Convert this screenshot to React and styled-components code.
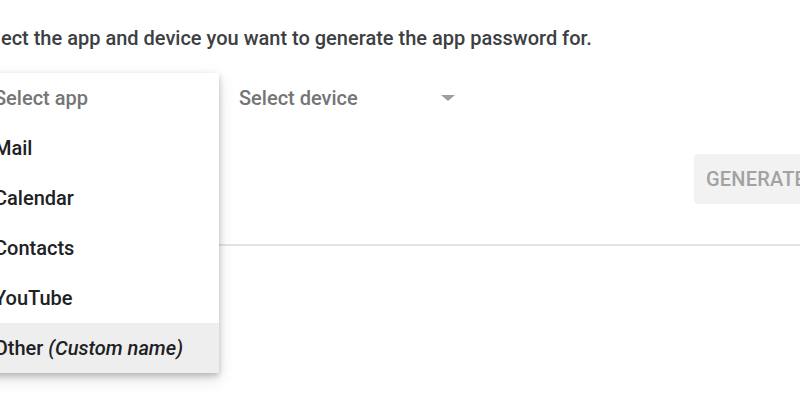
import React from "react";
import styled, { createGlobalStyle } from "styled-components";

const Global = createGlobalStyle`
  html, body { margin: 0; padding: 0; background: #fff; }
  body { font-family: Roboto, "Noto Sans", Arial, sans-serif; overflow: hidden; width: 800px; height: 400px; }
`;

const Page = styled.div`
  box-sizing: border-box;
  padding-top: 26px;
  width: 800px;
  height: 400px;
  overflow: hidden;
`;

const Inner = styled.div`
  margin-left: -27px;
  display: flex;
  flex-direction: column;
`;

const Heading = styled.div`
  font-size: 20px;
  line-height: 24px;
  font-weight: 500;
  color: #3c4043;
  white-space: nowrap;
`;

const FieldsRow = styled.div`
  margin-top: 23px;
  display: flex;
  height: 50px;
`;

const Field = styled.div`
  position: relative;
  width: ${(p) => p.$w}px;
  height: 50px;
  display: flex;
  align-items: center;
  padding-left: 20px;
  box-sizing: border-box;
  font-size: 20px;
  font-weight: 500;
  color: #757575;
`;

const Arrow = styled.span`
  margin-left: auto;
  margin-right: 14px;
  width: 0;
  height: 0;
  border-left: 7px solid transparent;
  border-right: 7px solid transparent;
  border-top: 6px solid #9e9e9e;
`;

const Menu = styled.ul`
  position: absolute;
  top: 0;
  left: 0;
  width: 246px;
  margin: 0;
  padding: 0;
  list-style: none;
  background: #fff;
  box-shadow: 0 3px 6px rgba(0, 0, 0, 0.22), 0 6px 16px rgba(0, 0, 0, 0.12);
  z-index: 2;
`;

const Item = styled.li`
  height: 50px;
  display: flex;
  align-items: center;
  padding-left: 21px;
  font-size: 20px;
  font-weight: 500;
  white-space: nowrap;
  color: ${(p) => (p.$placeholder ? "#757575" : "#202124")};
  background: ${(p) => (p.$active ? "#eeeeee" : "transparent")};
`;

const Em = styled.em`
  font-style: italic;
  margin-left: 5px;
`;

const Actions = styled.div`
  margin-top: 31px;
  padding-left: 721px;
  display: flex;
`;

const Button = styled.button`
  height: 50px;
  padding: 0 12px;
  border: none;
  border-radius: 4px;
  background: #f2f2f2;
  color: #a2a2a2;
  font-family: Roboto, Arial, sans-serif;
  font-size: 20px;
  font-weight: 500;
  letter-spacing: 0.2px;
  white-space: nowrap;
`;

const Divider = styled.hr`
  margin: 40px 0 0 0;
  border: none;
  border-top: 2px solid #e3e3e3;
  width: 900px;
`;

const apps = ["Mail", "Calendar", "Contacts", "YouTube"];

export default function App() {
  return (
    <>
      <Global />
      <Page>
        <Inner>
          <Heading>Select the app and device you want to generate the app password for.</Heading>
          <FieldsRow>
            <Field $w={246}>
              Select app
              <Menu>
                <Item $placeholder>Select app</Item>
                {apps.map((a) => (
                  <Item key={a}>{a}</Item>
                ))}
                <Item $active>
                  Other<Em>(Custom name)</Em>
                </Item>
              </Menu>
            </Field>
            <Field $w={250}>
              Select device
              <Arrow />
            </Field>
          </FieldsRow>
          <Actions>
            <Button disabled>GENERATE</Button>
          </Actions>
          <Divider />
        </Inner>
      </Page>
    </>
  );
}
